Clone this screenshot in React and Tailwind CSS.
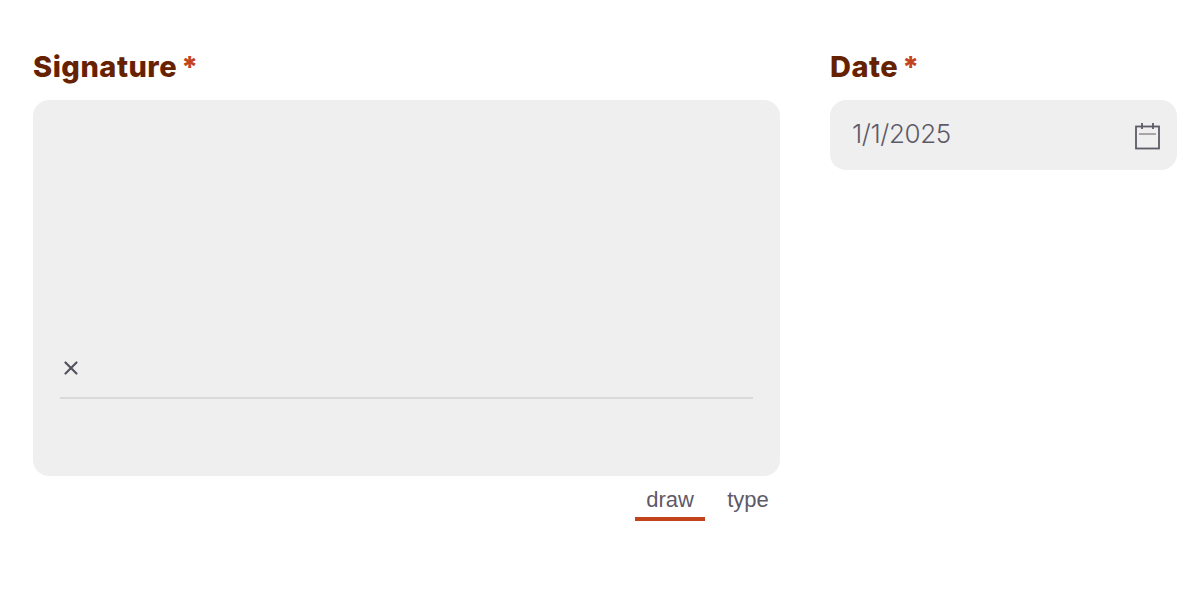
import { X } from 'lucide-react'

const LABEL = "font-['Inter',sans-serif] font-extrabold text-[29px] leading-[34px] tracking-[0.5px] text-[#662200]"
const STAR = "ml-[4px] text-[#c2441c]"

function CalendarIcon() {
  return (
    <svg width="26" height="29" viewBox="0 0 26 29" fill="none" className="text-[#5e5a68]">
      <rect x="1" y="5.5" width="23" height="22" stroke="currentColor" strokeWidth="1.8" />
      <path d="M7 2v6M18 2v6" stroke="currentColor" strokeWidth="1.8" />
      <path d="M4 13h17" stroke="#a8a4a8" strokeWidth="2" />
    </svg>
  )
}

export default function App() {
  return (
    <div className="h-[600px] w-[1200px] overflow-hidden bg-white pl-[33px] pt-[50px]">
      <div className="flex gap-[50px]">
        <div className="w-[747px]">
          <p className={LABEL}>
            Signature<span className={STAR}>*</span>
          </p>
          <div className="mt-4 flex h-[376px] flex-col justify-end rounded-2xl bg-[#efefef] px-[27px] pb-[77px]">
            <X size={22} strokeWidth={2.4} className="mb-[18px] text-[#55525f]" />
            <div className="h-[2px] w-[693px] bg-[#d9d9d9]" />
          </div>
          <div className="flex justify-end font-['Liberation_Sans',sans-serif] text-[22px] leading-6 text-[#5e5a68]">
            <span className="mt-3 w-[70px] border-b-4 border-[#c2441c] pb-[5px] text-center">draw</span>
            <span className="mt-3 ml-[11px] w-[64px] pb-[5px] text-center">type</span>
          </div>
        </div>
        <div className="w-[347px]">
          <p className={LABEL}>
            Date<span className={STAR}>*</span>
          </p>
          <div className="mt-4 flex h-[70px] items-center justify-between rounded-2xl bg-[#efefef] pl-[22px] pr-[16px]">
            <span className="pb-[3px] font-['Inter',sans-serif] text-[26px] font-light tracking-[-0.4px] text-[#5e5a68]">1/1/2025</span>
            <CalendarIcon />
          </div>
        </div>
      </div>
    </div>
  )
}
